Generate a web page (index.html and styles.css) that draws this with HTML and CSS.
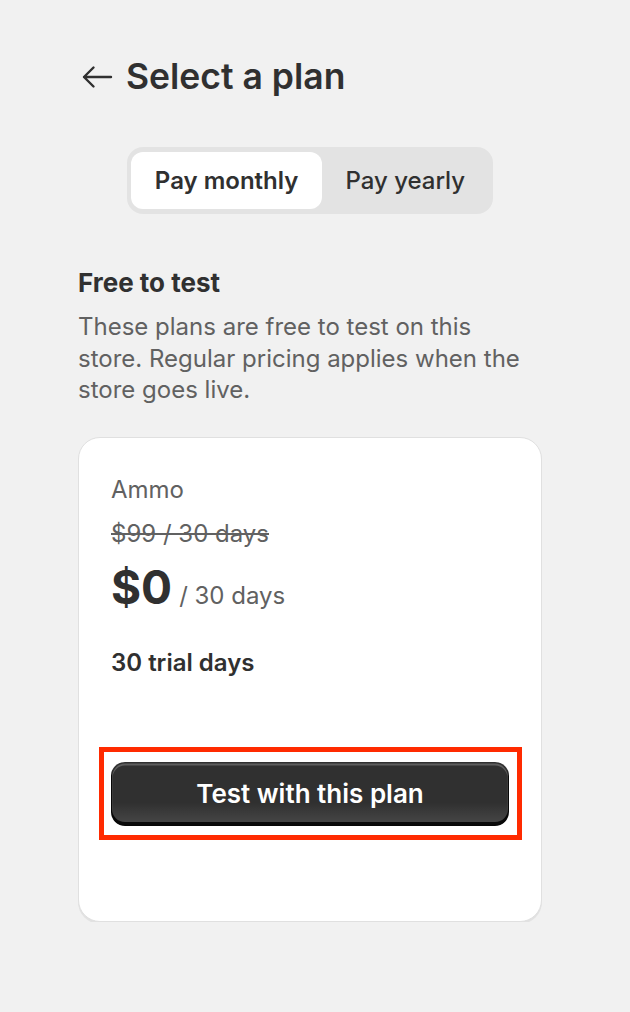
FILE: index.html
```html
<!DOCTYPE html>
<html lang="en">
<head>
<meta charset="utf-8">
<title>Select a plan</title>
<link rel="stylesheet" href="styles.css">
</head>
<body>
<main class="page">
  <header class="header">
    <svg class="back" width="32" height="32" viewBox="0 0 32 32" aria-hidden="true">
      <path d="M30 16H3 M12.5 6.5 L3 16 L12.5 25.5" fill="none" stroke="#303030" stroke-width="2.4" stroke-linecap="round" stroke-linejoin="round"/>
    </svg>
    <h1 class="title">Select a plan</h1>
  </header>

  <div class="toggle-wrap">
    <div class="toggle">
      <button class="tab tab-active">Pay monthly</button>
      <button class="tab">Pay yearly</button>
    </div>
  </div>

  <section class="intro">
    <h2 class="intro-title">Free to test</h2>
    <p class="intro-text">These plans are free to test on this store. Regular pricing applies when the store goes live.</p>
  </section>

  <div class="card">
    <div class="plan-name">Ammo</div>
    <div class="old-price">$99 / 30 days</div>
    <div class="price"><span class="price-big">$0</span><span class="price-unit">/ 30 days</span></div>
    <div class="trial">30 trial days</div>
    <div class="cta-wrap">
      <button class="cta">Test with this plan</button>
      <span class="highlight" aria-hidden="true"></span>
    </div>
  </div>
</main>
</body>
</html>
```

FILE: styles.css
```css
* { box-sizing: border-box; }
html, body {
  margin: 0;
  padding: 0;
  background: #f1f1f1;
}
body {
  font-family: Inter, "Noto Sans", "Liberation Sans", sans-serif;
  color: #303030;
}
.page {
  width: 464px;
  margin-left: 78px;
  padding-top: 57px;
}
.header {
  display: flex;
  align-items: center;
  gap: 13px;
  padding-left: 3px;
}
.back { display: block; flex: none; }
.title {
  margin: 0;
  font-size: 35.5px;
  line-height: 40px;
  font-weight: 600;
  color: #303030;
}
.toggle-wrap {
  display: flex;
  justify-content: center;
  margin-top: 50px;
}
.toggle {
  display: flex;
  padding: 5px 4px;
  background: #e3e3e3;
  border-radius: 16px;
}
.tab {
  font-family: inherit;
  border: 0;
  background: transparent;
  height: 57px;
  padding: 0 23.5px;
  font-size: 24px;
  font-weight: 450;
  color: #303030;
  border-radius: 12px;
  cursor: pointer;
}
.tab-active {
  background: #ffffff;
  font-weight: 600;
}
.intro { margin-top: 53px; }
.intro-title {
  margin: 0;
  font-size: 26px;
  line-height: 32px;
  font-weight: 650;
  color: #303030;
}
.intro-text {
  margin: 12px 0 0;
  font-size: 24px;
  line-height: 31.5px;
  color: #616161;
}
.card {
  margin-top: 31px;
  background: #ffffff;
  border: 1px solid #e0e0e0;
  border-radius: 22px;
  box-shadow: 0 2px 0 rgba(0, 0, 0, 0.06);
  padding: 36px 32px 95px;
}
.plan-name {
  font-size: 24px;
  line-height: 32px;
  color: #616161;
}
.old-price {
  margin-top: 12px;
  font-size: 24px;
  line-height: 32px;
  color: #616161;
  text-decoration: line-through;
}
.price {
  display: flex;
  align-items: baseline;
  gap: 7px;
  margin-top: 9px;
}
.price-big {
  font-size: 46px;
  line-height: 56px;
  font-weight: 700;
  color: #303030;
}
.price-unit {
  font-size: 24px;
  line-height: 32px;
  color: #616161;
}
.trial {
  margin-top: 32px;
  font-size: 24px;
  line-height: 32px;
  font-weight: 600;
  color: #303030;
}
.cta-wrap {
  position: relative;
  margin-top: 83px;
}
.cta {
  display: block;
  width: 100%;
  height: 64px;
  border: 0;
  border-radius: 14px;
  font-family: inherit;
  font-size: 26px;
  font-weight: 600;
  color: #ffffff;
  background: linear-gradient(180deg, rgba(48,48,48,0) 63%, rgba(255,255,255,0.12)), #303030;
  box-shadow:
    inset 0 -3px 0 1px rgba(0,0,0,0.85),
    inset 0 0 0 1.5px #303030,
    inset 0 2px 0 1.5px rgba(255,255,255,0.22);
  cursor: pointer;
}
.highlight {
  position: absolute;
  top: -15px;
  bottom: -14px;
  left: -12px;
  right: -13px;
  border: 5px solid #ff2a00;
  pointer-events: none;
}
```
